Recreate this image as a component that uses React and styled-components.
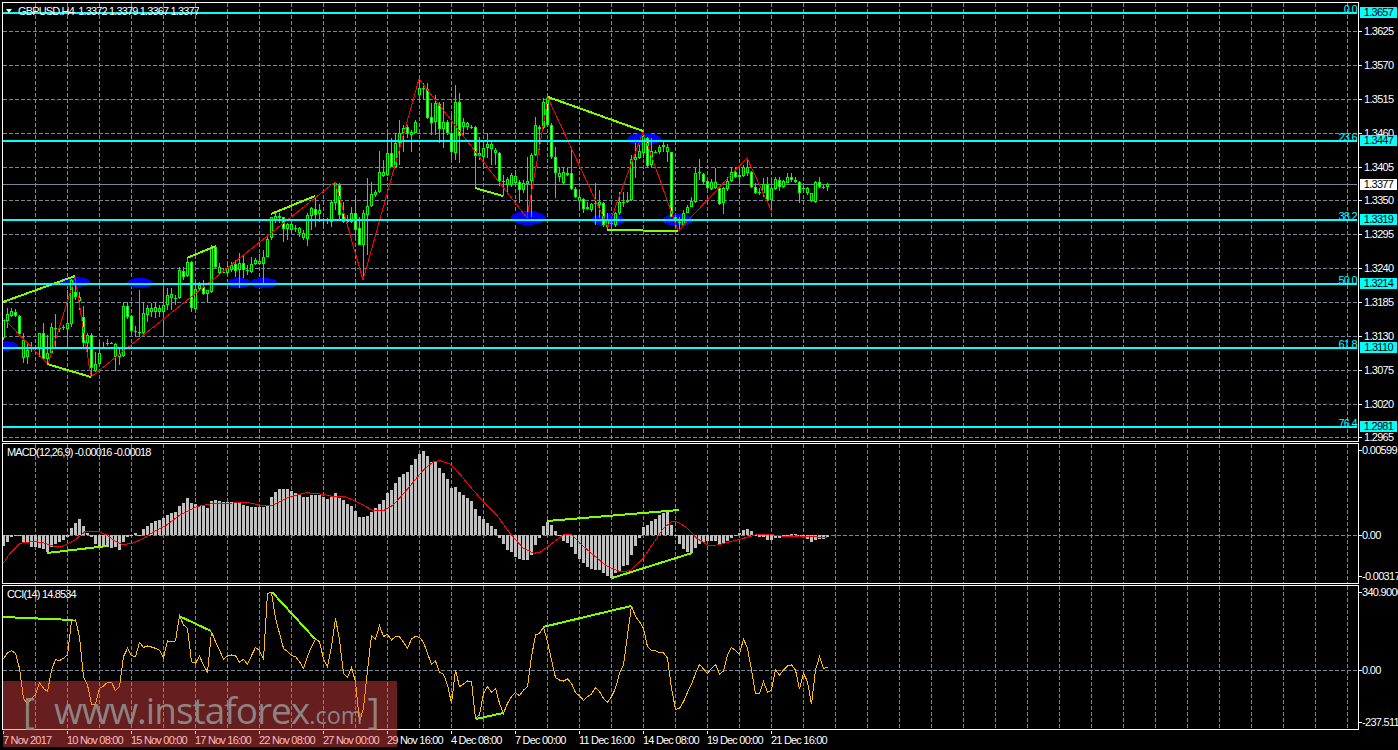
import React from "react";
import styled, { createGlobalStyle } from "styled-components";

const GlobalStyle = createGlobalStyle`
  html, body { margin: 0; padding: 0; background: #000; }
`;

const Terminal = styled.div`
  position: relative;
  box-sizing: border-box;
  width: 1398px;
  height: 750px;
  padding: 2px 0 0 2px;
  display: flex;
  flex-direction: column;
  gap: 1px;
  background: #000;
  overflow: hidden;
  font-family: "Liberation Sans", Arial, sans-serif;
  font-size: 11px;
  letter-spacing: -0.7px;
  color: #fff;
`;
const PaneRow = styled.section`
  display: flex;
  height: ${(p) => p.$h}px;
  flex: none;
`;
const Plot = styled.div`
  position: relative;
  box-sizing: border-box;
  flex: none;
  width: 1357px;
  height: 100%;
  border: 1px solid #fff;
  overflow: hidden;
`;
const Chart = styled.svg`
  display: block;
  width: 100%;
  height: 100%;
`;
const Axis = styled.div`
  position: relative;
  flex: 1;
  display: flex;
  flex-direction: column;
  padding-top: ${(p) => p.$pad}px;
`;
const AxisValue = styled.span`
  position: relative;
  flex: none;
  height: ${(p) => p.$h}px;
  padding-left: ${(p) => p.$inset}px;
  line-height: 12px;
  white-space: nowrap;
  &::before {
    content: "";
    position: absolute;
    left: 0;
    top: 6px;
    width: 3px;
    height: 1px;
    background: #fff;
  }
`;
const PriceTag = styled.span`
  position: absolute;
  left: 1px;
  width: 37px;
  height: 11px;
  line-height: 11px;
  text-align: center;
  color: #000;
  background: ${(p) => p.$bg};
`;
const PaneCaption = styled.span`
  position: absolute;
  left: 4px;
  top: 2px;
  line-height: 12px;
  white-space: nowrap;
  letter-spacing: -0.83px;
`;
const SymbolCaption = styled(PaneCaption)`
  left: 15px;
  height: 10px;
  overflow: hidden;
  letter-spacing: -0.85px;
`;
const MenuTriangle = styled.i`
  position: absolute;
  left: 3px;
  top: 6px;
  width: 0;
  height: 0;
  border-left: 3.5px solid transparent;
  border-right: 3.5px solid transparent;
  border-top: 4px solid #fff;
`;
const FibLabel = styled.span`
  position: absolute;
  right: 1px;
  line-height: 10px;
  color: #00ffff;
`;
const TimeAxis = styled.div`
  display: flex;
  padding-left: 1px;
`;
const TimeCell = styled.div`
  position: relative;
  flex: none;
  width: 64px;
  padding-top: 3px;
  line-height: 12px;
  white-space: nowrap;
  letter-spacing: -0.8px;
  &::before {
    content: "";
    position: absolute;
    left: 0;
    top: 0;
    width: 1px;
    height: 3px;
    background: #fff;
  }
`;
const Watermark = styled.div`
  position: absolute;
  left: 3px;
  top: 681px;
  width: 394px;
  height: 66px;
  display: flex;
  align-items: baseline;
  padding: 0 0 0 20px;
  box-sizing: border-box;
  background: rgba(255, 75, 75, 0.4);
  color: rgba(150, 150, 150, 0.85);
  font-family: "Open Sans", "Noto Sans", sans-serif;
  font-weight: 400;
  letter-spacing: 0;
  white-space: nowrap;
  pointer-events: none;
`;
const MarkBig = styled.span`
  font-size: 37px;
  line-height: 58px;
  letter-spacing: -1px;
`;
const MarkBracket = styled(MarkBig)`
  margin: ${(p) => p.$m};
`;
const MarkSmall = styled.span`
  font-size: 23.5px;
  line-height: 58px;
`;

/* ---- chart data (traced values: [high, bodyTop, bodyBottom, low, whiteBody]) ---- */
const groupA = [
  [240,240,295,300,0],[205,222,242,265,0],[205,212,228,232,0],[208,215,228,230,1],[225,228,282,285,1],[280,300,353,368,0],
  [305,330,352,372,0],[305,320,320,335,0],[315,322,322,330,0],[280,280,325,350,0],[250,280,358,360,1],[285,338,358,372,0],
  [250,262,340,342,0],[222,265,265,320,0],[255,265,265,275,0],[255,262,262,270,0],[150,248,266,320,0],[118,120,252,260,0],
  [110,155,172,180,1],[155,172,182,210,0],[198,232,310,325,1],[280,285,310,350,0],[280,285,385,410,1],[335,373,392,395,0],
  [310,340,372,375,0],[305,320,320,328,0],[298,310,310,318,0],[305,308,308,312,0],[310,312,352,392,0],[320,342,352,375,0],
  [185,198,348,350,0],[185,198,232,238,1],[226,228,272,278,1],[258,272,272,290,0],[150,275,275,290,0],[185,220,278,282,0],
  [195,205,225,245,0],[190,205,215,230,0],[185,202,215,235,0],[195,205,215,230,0],[145,195,215,285,0],[145,165,195,210,0],
  [145,163,175,210,0],[165,174,176,195,0],[80,90,175,178,0],[80,93,110,120,1],[55,65,107,110,0],[62,65,205,215,1],
  [130,148,208,210,0],[125,135,148,150,0],[120,142,162,165,1],[150,150,162,190,0],[15,20,155,160,0],[15,20,80,85,1],
  [70,82,100,105,0],[85,95,95,100,0],[70,85,100,105,0],[65,75,90,95,0],[60,72,92,110,1],[40,70,90,145,0],
  [45,70,90,115,1],[75,90,90,105,0],[50,72,95,100,0],[55,60,72,75,0],[42,62,72,75,0],[30,50,72,135,0],
];
const groupB = [
  [705,718,770,770,0],[650,652,715,720,0],[640,648,660,670,0],[640,648,655,668,0],[650,652,686,725,1],[668,672,688,720,0],
  [665,672,690,700,0],[675,684,684,695,0],[680,685,700,710,0],[690,698,715,720,0],[640,645,717,738,0],[620,625,648,690,0],
  [590,628,645,680,1],[612,630,642,665,0],[655,658,658,680,0],[655,660,660,672,0],[600,605,665,680,0],[545,550,610,630,0],
  [550,555,645,660,1],[605,640,665,670,1],[645,662,662,670,0],[620,640,665,670,0],[590,640,690,720,1],[650,685,735,735,1],
  [630,640,735,840,0],[535,618,645,765,0],[545,583,618,620,0],[570,575,585,592,0],[453,517,575,578,0],[480,517,528,530,0],
];
const groupC = [
  [190,248,315,318,0],[205,248,290,292,1],[190,218,290,292,0],[150,190,218,285,0],[165,175,190,245,0],[165,172,192,205,1],[180,186,195,245,0],[150,155,190,190,0],
  [28,55,75,100,0],[40,55,58,90,0],[40,58,143,148,1],[100,142,158,195,1],[75,100,155,195,0],[95,102,178,220,1],[95,156,178,235,0],[150,156,190,195,1],
  [130,188,245,270,1],[45,95,248,270,0],[70,95,198,278,1],[145,155,172,195,0],[155,160,172,180,0],[165,172,172,178,0],[168,172,258,358,1],[200,250,258,270,0],
  [215,235,262,295,0],[190,222,235,265,0],[215,222,238,285,0],[235,240,248,285,0],[245,248,332,348,1],[315,332,332,378,0],[320,328,345,372,0],[310,315,345,350,0],
  [300,318,338,352,0],[330,335,360,400,1],[330,340,360,370,0],[262,332,342,425,0],[250,255,332,440,0],[142,165,255,258,0],[165,170,176,240,0],[85,95,175,178,0],
  [80,85,165,170,1],[160,165,262,268,1],[230,262,308,385,1],[290,310,320,335,0],[290,307,340,342,0],[295,308,314,318,0],[240,308,356,360,1],[350,356,380,385,1],
  [360,382,392,418,0],[385,388,416,430,1],[395,412,416,420,0],[398,402,420,425,0],[340,400,400,465,0],[360,397,404,445,0],[395,398,465,470,1],[430,450,470,480,0],
  [445,460,460,475,0],[425,430,465,470,0],[365,395,430,435,0],[365,396,396,410,0],[365,390,395,400,0],[255,268,390,393,0],[220,262,270,325,0],[225,243,265,268,0],
  [180,198,250,265,0],[200,205,288,290,1],[205,243,285,290,0],[240,245,245,250,0],[225,230,247,252,0],[215,225,230,245,0],[222,230,245,275,0],[245,247,440,442,1],
  [435,440,448,470,1],[440,455,455,480,0],[420,428,465,468,0],[405,410,428,430,0],[380,392,410,412,0],[293,308,395,398,0],[268,305,310,330,0],[310,313,335,345,1],
  [330,333,355,358,1],[328,335,357,360,0],[293,335,355,358,0],[350,355,403,405,1],[350,355,400,432,0],[322,332,358,362,0],[290,307,332,335,0],[290,305,320,325,1],
  [295,316,320,342,0],[285,292,318,320,0],[265,290,310,318,0],[302,305,350,353,1],[340,350,370,372,1],[355,367,367,375,0],[325,343,370,380,0],[322,342,390,395,1],
  [328,355,390,425,0],[322,328,358,360,0],[322,330,350,362,1],[330,333,350,355,0],[308,320,338,340,0],[308,320,330,335,1],[322,330,336,340,0],[332,335,368,400,1],
  [348,353,353,360,0],[350,355,368,375,0],[368,370,392,395,0],[333,337,395,398,0],[322,335,350,355,1],[345,350,350,358,0],[340,343,352,362,0],
];
const toPx = (base) => (v) => Math.round(base + v / 3);
const candles = [
  ...groupA.map((c) => [...c.slice(0, 4).map(toPx(240)), c[4]]),
  ...groupB.map((c) => [...c.slice(0, 4).map(toPx(0)), c[4]]),
  ...groupC.map((c) => [...c.slice(0, 4).map(toPx(70)), c[4]]),
];
const barX = (k) => 3 + 4 * k;

const histA = [318,305,291,284,288,305,310,320,322,325,328,336,320,312,305,300,290,263,248,238,258,280,290,312,320,320,322,325,322,330,305,292,285,280,285,268,258,250,242,240,235,225,220,217,198,188,174,188,192,197,197,203,183,180,183,185,187,187,190,190,195,198,200,200,200,200,195,170,155,147,147,147,153,160,165,172,170,165,165,165,170,176,172,160,175,180,192,198,212,232,232,228,215,205,192,180,158,150,128,110,102,97,75,57,42,33,48,65,65,85,98,118,145,142,156];
const histB = [165,174,183,207,228,237,249,258,267,293,312,330,336,350,357,360,360,345,315,295,258,246,255,273,287,303,309,321,342,357,369,381,387,390,390,400,408,414,400,393,378,375,345,318,294,261,255,243,237,225,219,213,255,287,312,327,336,338,323,312,306,303,303,303,315,309,303,294,288,279,270,267,273,285,290,291,300,300,293,293,290,288,283,283,288,290,296,305,300,296,296,292];
const hist = [...histA, ...histB].map((v) => 440 + v / 3);
const macdZero = 535;

const signalA = [[10,370],[30,340],[60,310],[100,304],[130,308],[160,318],[190,318],[225,300],[255,275],[295,274],[320,285],[345,303],[365,313],[395,311],[430,295],[465,273],[500,255],[540,225],[590,200],[640,190],[700,189],[740,187],[780,195],[820,195],[870,170],[920,158],[970,163],[1000,170],[1035,170],[1070,185],[1120,212],[1150,212],[1180,195],[1220,150],[1270,90],[1300,65],[1320,62],[1350,72],[1380,103]];
const signalB = [[35,145],[70,185],[110,225],[150,280],[190,325],[220,340],[240,337],[270,315],[310,285],[335,283],[360,310],[400,345],[440,378],[480,395],[510,392],[545,360],[580,310],[610,265],[635,245],[650,245],[680,262],[710,295],[745,316],[770,315],[800,308],[850,295],[890,284],[935,284],[970,289],[1020,288],[1060,290],[1100,293]];
const signal = [...signalA.map(([x, y]) => [x / 3, 440 + y / 3]), ...signalB.map(([x, y]) => [460 + x / 3, 440 + y / 3])];

const cciRaw = [222,203,197,205,250,340,357,340,330,293,310,320,255,224,227,220,210,108,105,155,275,300,358,358,310,303,292,292,317,305,215,190,212,215,172,187,183,186,190,196,218,168,170,168,92,120,130,230,235,213,240,262,140,170,195,222,213,210,212,232,223,238,212,187,197,222,25,22,100,145,190,200,212,215,230,250,215,185,162,170,222,245,185,100,165,265,278,248,290,410,370,255,152,162,122,155,148,165,155,155,172,190,162,154,157,172,205,238,228,262,268,300,355,255,305,297,288,290,400,390,325,305,322,310,355,385,355,335,323,332,315,305,215,150,145,127,170,225,278,285,288,282,295,323,332,346,335,327,308,320,340,352,335,310,265,240,150,62,95,110,130,185,197,197,203,203,220,310,373,370,350,322,298,265,238,252,265,250,238,267,258,210,187,197,207,162,190,255,327,325,290,322,315,255,270,255,243,240,255,312,265,290,358,255,215,250,247];
const cci = cciRaw.map((v, k) => [barX(k) + 0.5, 585 + v / 3]);

const toPoints = (pts) => pts.map(([x, y]) => `${x},${y}`).join(" ");

const zigzag = [[3,318],[48,364],[75,277],[91,377],[335,182],[363,280],[419,79],[527,218],[548,98],[608,227],[643,132],[678,231],[747,158],[772,212]];

const mainDiv = [[3,302,75,276],[47,364,91,377],[187,258,216,246],[271,214,315,196],[475,188,503,196],[548,97,643,131],[607,230,678,231]];
const macdDiv = [[47,553,107,546],[547,521,679,510],[612,578,692,553]];
const cciDiv = [[3,617,73,620],[179,616,211,631],[272,592,315,639],[543,627,631,606],[476,719,503,713]];

const blobs = [[3,346,15,5],[75,282,15,5],[140,283,13,5],[239,283,12,5],[264,283,14,5],[528,218,17,7],[608,220,17,6],[644,139,17,6],[678,220,15,6]];

const fibLevels = [
  { y: 13, price: "1.3657", label: "0.0" },
  { y: 141, price: "1.3447", label: "23.6" },
  { y: 220, price: "1.3319", label: "38.2" },
  { y: 284, price: "1.3214", label: "50.0" },
  { y: 348, price: "1.3110", label: "61.8" },
  { y: 427, price: "1.2981", label: "76.4" },
];
const priceTicks = [
  [31,"1.3625"],[65,"1.3570"],[99,"1.3515"],[133,"1.3460"],[167,"1.3405"],[200,"1.3350"],[234,"1.3295"],
  [268,"1.3240"],[302,"1.3185"],[336,"1.3130"],[370,"1.3075"],[404,"1.3020"],[437,"1.2965"],
];
const timeLabels = ["7 Nov 2017","10 Nov 08:00","15 Nov 00:00","17 Nov 16:00","22 Nov 08:00","27 Nov 00:00","29 Nov 16:00","4 Dec 08:00","7 Dec 00:00","11 Dec 16:00","14 Dec 08:00","19 Dec 00:00","21 Dec 16:00"];

const GRID = "#778899";
const DASH = "4 2";
const vGrid = Array.from({ length: 42 }, (_, i) => 35 + 32 * i);

const Grid = ({ top, bottom, levels }) => (
  <g stroke={GRID} strokeWidth="1" strokeDasharray={DASH}>
    {vGrid.map((x) => (
      <line key={x} x1={x + 0.5} x2={x + 0.5} y1={top} y2={bottom} />
    ))}
    {levels.map((y) => (
      <line key={y} x1={3} x2={1357} y1={y + 0.5} y2={y + 0.5} />
    ))}
  </g>
);

const DivLines = ({ items }) => (
  <g stroke="#7fff00" strokeWidth="2">
    {items.map(([a, b, c, d]) => (
      <line key={`${a}-${b}`} x1={a} y1={b} x2={c} y2={d} />
    ))}
  </g>
);

const Candle = ({ k, c }) => {
  const [hi, top, bot, lo, white] = c;
  const x = barX(k);
  const h = Math.max(bot - top, 1);
  return (
    <g>
      <rect x={x} y={hi} width="1" height={Math.max(lo - hi, 1)} fill="#00ff00" />
      <rect x={x - 1} y={top} width="3" height={h} fill="#00ff00" />
      {h > 2 && <rect x={x} y={top + 1} width="1" height={h - 2} fill={white ? "#fff" : "#000"} />}
    </g>
  );
};

export default function App() {
  return (
    <>
      <GlobalStyle />
      <Terminal>
        <PaneRow $h={440}>
          <Plot>
            <Chart viewBox="3 3 1355 438" shapeRendering="crispEdges">
              <Grid top={3} bottom={441} levels={priceTicks.map((t) => t[0])} />
              <g fill="#0000ff">
                {blobs.map(([x, y, rx, ry]) => (
                  <ellipse key={x} cx={x} cy={y} rx={rx} ry={ry} />
                ))}
              </g>
              <line x1="3" x2="1357" y1="184.5" y2="184.5" stroke={GRID} />
              {candles.map((c, k) => (
                <Candle key={k} k={k} c={c} />
              ))}
              <polyline points={toPoints(zigzag)} fill="none" stroke="#ff0000" />
              <DivLines items={mainDiv} />
              <g stroke="#00ffff" strokeWidth="2">
                {fibLevels.map((f) => (
                  <line key={f.y} x1="3" x2="1357" y1={f.y} y2={f.y} />
                ))}
              </g>
            </Chart>
            <MenuTriangle />
            <SymbolCaption>GBPUSD,H4&nbsp; 1.3372 1.3379 1.3367 1.3377</SymbolCaption>
            {fibLevels.map((f) => (
              <FibLabel key={f.y} style={{ top: f.y - 12 }}>{f.label}</FibLabel>
            ))}
          </Plot>
          <Axis $pad={23}>
            {priceTicks.map(([y, t], i) => (
              <AxisValue key={y} $inset={5} $h={i < priceTicks.length - 1 ? priceTicks[i + 1][0] - y : 12}>{t}</AxisValue>
            ))}
            {fibLevels.map((f) => (
              <PriceTag key={f.y} $bg="#00ffff" style={{ top: f.y - 8 }}>{f.price}</PriceTag>
            ))}
            <PriceTag $bg="#fff" style={{ top: 177 }}>1.3377</PriceTag>
          </Axis>
        </PaneRow>

        <PaneRow $h={141}>
          <Plot>
            <Chart viewBox="3 444 1355 139" shapeRendering="crispEdges">
              <Grid top={444} bottom={583} levels={[macdZero]} />
              <g fill="#c0c0c0">
                {hist.map((v, k) => {
                  const up = v < macdZero;
                  return (
                    <rect key={k} x={barX(k) - 1} y={up ? v : macdZero} width="3" height={Math.max(Math.abs(v - macdZero), 1)} />
                  );
                })}
              </g>
              <polyline points={toPoints(signal)} fill="none" stroke="#ff0000" />
              <DivLines items={macdDiv} />
            </Chart>
            <PaneCaption>MACD(12,26,9) -0.00016 -0.00018</PaneCaption>
          </Plot>
          <Axis $pad={1}>
            <AxisValue $inset={3} $h={85}>0.00599</AxisValue>
            <AxisValue $inset={3} $h={41}>0.00</AxisValue>
            <AxisValue $inset={3} $h={12}>-0.00317</AxisValue>
          </Axis>
        </PaneRow>

        <PaneRow $h={145}>
          <Plot>
            <Chart viewBox="3 586 1355 143" shapeRendering="crispEdges">
              <Grid top={586} bottom={729} levels={[670]} />
              <polyline points={toPoints(cci)} fill="none" stroke="#ffc000" />
              <DivLines items={cciDiv} />
            </Chart>
            <PaneCaption>CCI(14) 14.8534</PaneCaption>
          </Plot>
          <Axis $pad={1}>
            <AxisValue $inset={3} $h={78}>340.9006</AxisValue>
            <AxisValue $inset={3} $h={52}>0.00</AxisValue>
            <AxisValue $inset={3} $h={12}>-237.511</AxisValue>
          </Axis>
        </PaneRow>

        <TimeAxis>
          {timeLabels.map((t) => (
            <TimeCell key={t}>{t}</TimeCell>
          ))}
        </TimeAxis>

        <Watermark>
          <MarkBracket $m="0 20px 0 0">[</MarkBracket>
          <MarkBig>www.instaforex</MarkBig>
          <MarkSmall>.com</MarkSmall>
          <MarkBracket $m="0 0 0 5px">]</MarkBracket>
        </Watermark>
      </Terminal>
    </>
  );
}
